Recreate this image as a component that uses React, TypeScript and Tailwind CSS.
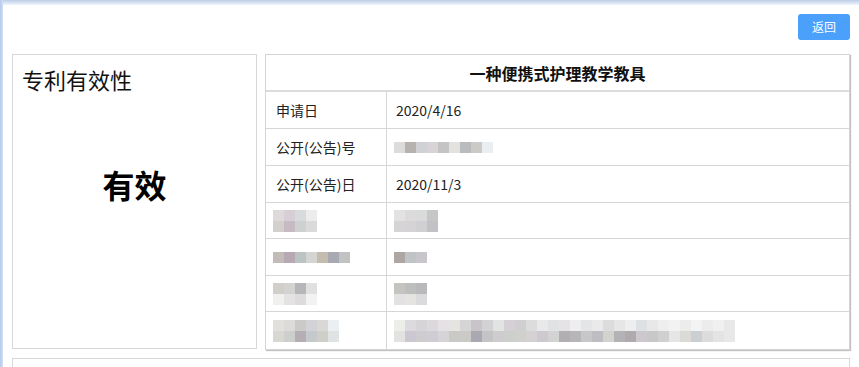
const fontCn = "font-['Microsoft_YaHei','Noto_Sans_CJK_SC',sans-serif]";

// pixelated placeholder for the blurred fields
function Mosaic({ rows, shift }: { rows: string[][]; shift: string }) {
  return (
    <div className={`flex flex-col blur-[0.6px] ${shift}`}>
      {rows.map((r, i) => (
        <div key={i} className="flex">
          {r.map((c, j) => (
            <div key={j} className="h-[11px] w-[11px]" style={{ background: c }} />
          ))}
        </div>
      ))}
    </div>
  );
}

type Cell = { text?: string; mosaic?: string[][] };

const rows: { label: Cell; value: Cell; h: string }[] = [
  { label: { text: "申请日" }, value: { text: "2020/4/16" }, h: "h-[37px]" },
  {
    label: { text: "公开(公告)号" },
    value: {
      mosaic: [["#dcdcdc", "#b8b2ae", "#cfd1d4", "#d7d3d6", "#c4c4c4", "#e4e2df", "#b9bbbd", "#cbcac6", "#e9eef3"]],
    },
    h: "h-[37px]",
  },
  { label: { text: "公开(公告)日" }, value: { text: "2020/11/3" }, h: "h-[37px]" },
  {
    label: {
      mosaic: [
        ["#dedadc", "#d8cfd6", "#d8dbdb", "#ececec"],
        ["#d2cfcd", "#c6bac3", "#cdd2d0", "#dadada"],
      ],
    },
    value: {
      mosaic: [
        ["#e3e1e2", "#dcdbdc", "#d9dbdb", "#c6c6c6"],
        ["#d6d4d5", "#d5d3d6", "#d0d0d2", "#c3c1c6"],
      ],
    },
    h: "h-[36px]",
  },
  {
    label: {
      mosaic: [["#c2bbb8", "#b6a9b3", "#bcc4c3", "#d4d4d2", "#c4bdaf", "#a8aab3", "#c2c2c2"]],
    },
    value: { mosaic: [["#ada6a3", "#c1c4c6", "#c8c6cb"]] },
    h: "h-[37px]",
  },
  {
    label: {
      mosaic: [
        ["#d2ceca", "#d3d3d0", "#b6b5b8", "#e0e0e0"],
        ["#f0f0ee", "#e4e2e2", "#dddbdc", "#f2f2f2"],
      ],
    },
    value: {
      mosaic: [
        ["#c5c4c0", "#bcbfbe", "#b9b9bb"],
        ["#e2e2e2", "#e6e4e1", "#dbdadc"],
      ],
    },
    h: "h-[36px]",
  },
  {
    label: {
      mosaic: [
        ["#e2e0dd", "#dcdbda", "#ccc9c9", "#d3d3d7", "#dad8d6", "#eceff1"],
        ["#d9d7d2", "#cccfcb", "#b5afb5", "#c6c9cc", "#cfcfca", "#e0e3e3"],
      ],
    },
    value: {
      mosaic: [
        ["#eceee8", "#dcdade", "#d6d4d6", "#dcd8dc", "#e4e2e4", "#e6e4e0", "#d5d5d5", "#c8c4c8", "#d2d2d4", "#e2e4e3", "#d4d0d5", "#d0cfcf", "#dcdcdc", "#e9e9e9", "#e1e2e4", "#e5e3e5", "#eeeeee", "#e3e5e7", "#eaeaea", "#dcdcdc", "#e6e6e6", "#eeeeee", "#dde1e3", "#e8e8e8", "#eeeeee", "#f2f2f2", "#ececec", "#f3f3f3", "#ececec", "#f0f0f0", "#e8e8e8"],
        ["#e2e3e0", "#ccc8d2", "#cfccd0", "#d0ccd3", "#d6d4d6", "#c9c9c6", "#cccac7", "#a9a8b3", "#c4c3c6", "#cfcccf", "#ccd0cc", "#d0d0cc", "#d5d2d4", "#cdc9ce", "#d4d3d3", "#b1afb1", "#b6b6b6", "#c7c6c8", "#bebec2", "#d3d3ce", "#b3b3b5", "#aeaaae", "#cdc8cd", "#c8c8c8", "#d0d0d0", "#e6e6e6", "#dcdad6", "#cccfd2", "#dcdcdc", "#e4e4e4", "#e8e8e8"],
      ],
    },
    h: "h-[37px]",
  },
];

function CellBody({ c, shift }: { c: Cell; shift: string }) {
  if (c.text) return <span>{c.text}</span>;
  if (c.mosaic) return <Mosaic rows={c.mosaic} shift={shift} />;
  return null;
}

export default function App() {
  return (
    <div className={`flex h-[367px] w-[859px] overflow-hidden bg-white text-[#222] ${fontCn}`}>
      <div className="w-[3px] shrink-0 bg-gradient-to-r from-[#b4c8ea] to-[#d3e0f4]" />
      <div className="flex min-w-0 flex-1 flex-col">
        <div className="h-[5px] shrink-0 bg-gradient-to-b from-[#bccde8] to-[#f2f5fb]" />
        <div className="flex flex-col pl-[9px] pr-[9px]">
          <div className="mt-[9px] flex justify-end">
            <button className="h-[26px] w-[52px] rounded-[3px] bg-[#4aa0fb] text-[12px] text-white">返回</button>
          </div>
          <div className="mt-[14px] flex gap-[8px]">
            <div className="flex h-[295px] w-[245px] shrink-0 flex-col border border-[#d8d8d8] px-[9px] pt-[8px]">
              <div className="text-[22px] leading-[32px] text-[#111]">专利有效性</div>
              <div className="mt-[69px] text-center text-[32px] font-bold leading-[40px] text-black">有效</div>
            </div>
            <div className="flex h-[296px] flex-1 flex-col border border-[#d4d4d4] shadow-[1px_1px_1px_#c2c2c2]">
              <div className="flex h-[37px] shrink-0 items-center justify-center border-b-2 border-[#dcdcdc] text-[16px] font-bold text-[#111]">
                一种便携式护理教学教具
              </div>
              {rows.map((r, i) => (
                <div
                  key={i}
                  className={`flex ${r.h} shrink-0 text-[14px] ${i < rows.length - 1 ? "border-b border-[#d6d6d6]" : ""}`}
                >
                  <div className="flex w-[121px] shrink-0 items-center border-r border-[#d6d6d6] pl-[10px]">
                    <CellBody c={r.label} shift="-ml-[3px]" />
                  </div>
                  <div className="flex flex-1 items-center pl-[9px]">
                    <CellBody c={r.value} shift="-ml-[2px]" />
                  </div>
                </div>
              ))}
            </div>
          </div>
          <div className="mt-[8px] h-[40px] border border-[#d8d8d8]" />
        </div>
      </div>
    </div>
  );
}
